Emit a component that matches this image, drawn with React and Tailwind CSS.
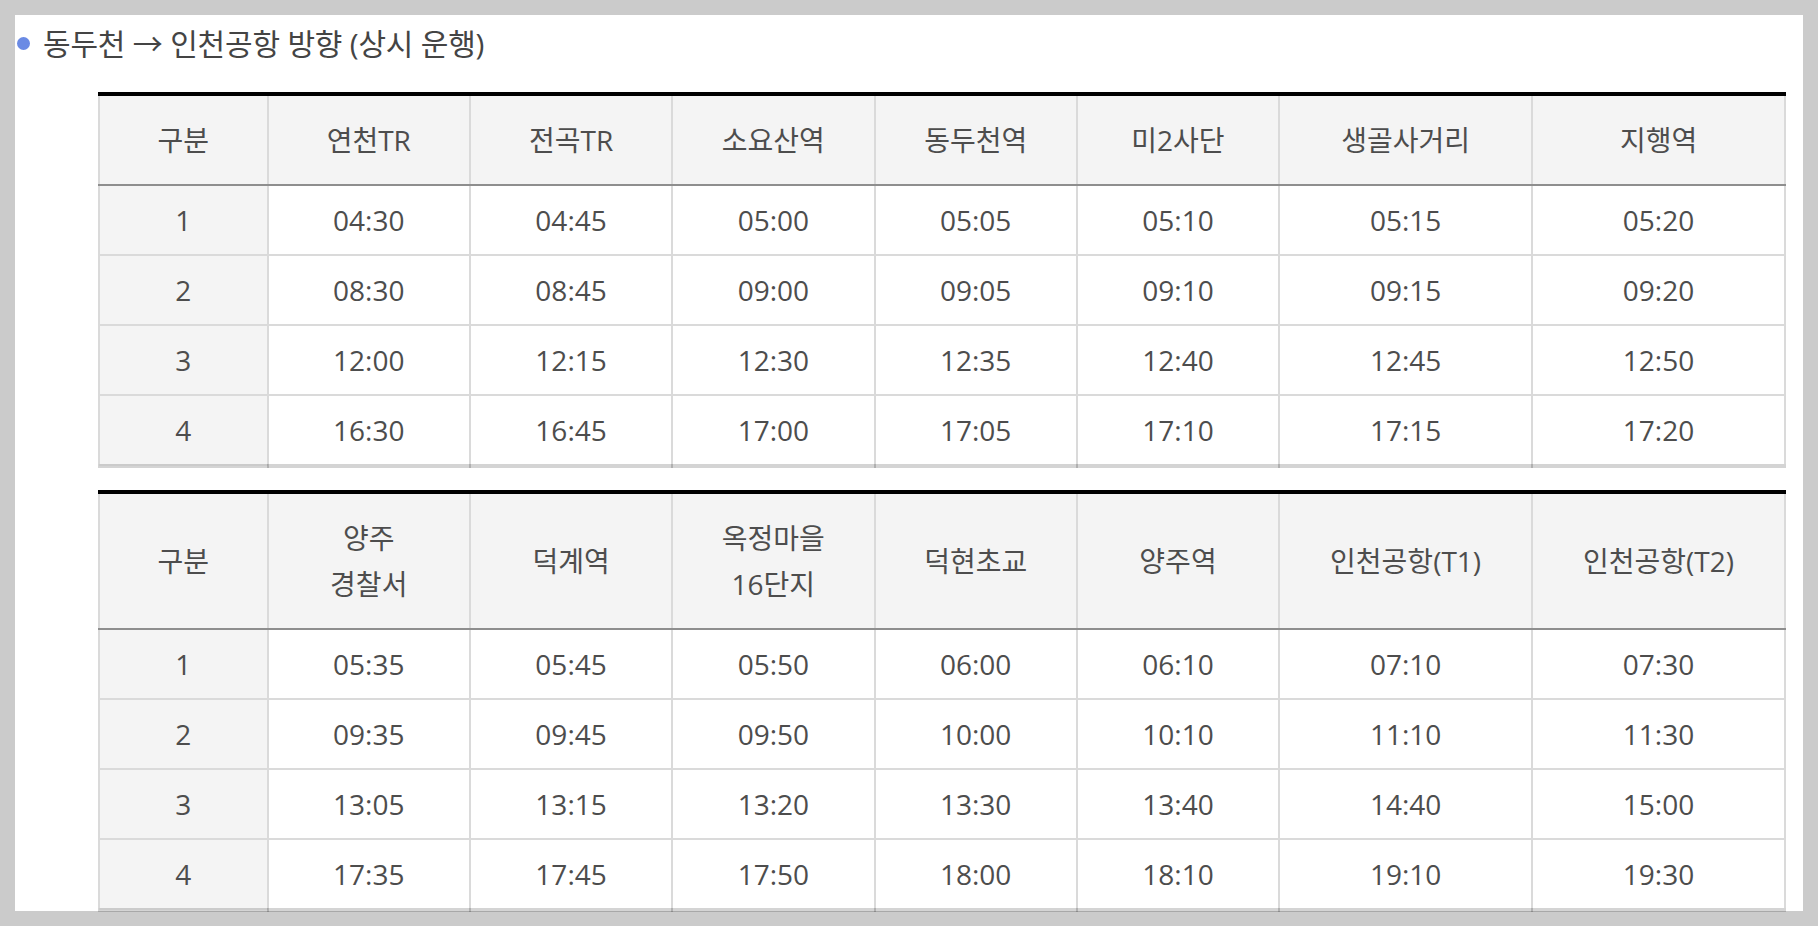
import React from 'react';

const font = { fontFamily: '"Open Sans", "Noto Sans CJK KR", sans-serif' };

const cols = ['w-[10%]', 'w-[12%]', 'w-[12%]', 'w-[12%]', 'w-[12%]', 'w-[12%]', 'w-[15%]', 'w-[15%]'];

const upper = {
  head: ['구분', '연천TR', '전곡TR', '소요산역', '동두천역', '미2사단', '생골사거리', '지행역'],
  rows: [
    ['1', '04:30', '04:45', '05:00', '05:05', '05:10', '05:15', '05:20'],
    ['2', '08:30', '08:45', '09:00', '09:05', '09:10', '09:15', '09:20'],
    ['3', '12:00', '12:15', '12:30', '12:35', '12:40', '12:45', '12:50'],
    ['4', '16:30', '16:45', '17:00', '17:05', '17:10', '17:15', '17:20'],
  ],
};

const lower = {
  head: ['구분', ['양주', '경찰서'], '덕계역', ['옥정마을', '16단지'], '덕현초교', '양주역', '인천공항(T1)', '인천공항(T2)'],
  rows: [
    ['1', '05:35', '05:45', '05:50', '06:00', '06:10', '07:10', '07:30'],
    ['2', '09:35', '09:45', '09:50', '10:00', '10:10', '11:10', '11:30'],
    ['3', '13:05', '13:15', '13:20', '13:30', '13:40', '14:40', '15:00'],
    ['4', '17:35', '17:45', '17:50', '18:00', '18:10', '19:10', '19:30'],
  ],
};

// one timetable block, black rule on top
const Timetable = ({ data, className = '' }) => (
  <table className={`w-full table-fixed border-collapse border-t-4 border-t-black border-x-2 border-x-[#dadada] border-b-4 border-b-[rgba(0,0,0,0.17)] text-[28px] text-[#4d4d4d] ${className}`}>
    <colgroup>
      {cols.map((c, i) => <col key={i} className={c} />)}
    </colgroup>
    <thead>
      <tr>
        {data.head.map((h, i) => (
          <th key={i} className="bg-[#f4f4f4] font-normal py-[21px] leading-[46px] border-x-2 border-x-[#dadada] border-b-2 border-b-[#8e8e8e] text-center">
            {Array.isArray(h) ? <>{h[0]}<br />{h[1]}</> : h}
          </th>
        ))}
      </tr>
    </thead>
    <tbody>
      {data.rows.map((r, ri) => (
        <tr key={ri}>
          {r.map((v, ci) => (
            <td key={ci} className={`py-[11px] leading-[46px] text-center border-2 border-[#dadada] ${ci === 0 ? 'bg-[#f4f4f4]' : 'bg-white'}`}>
              {v}
            </td>
          ))}
        </tr>
      ))}
    </tbody>
  </table>
);

export default function App() {
  return (
    <div className="min-h-screen bg-[#cbcbcb] p-[15px] pb-0" style={font}>
      <div className="bg-white h-[896px] pt-[5px] pr-[17px]">
        <h3 className="flex items-center h-[46px] text-[30px] font-normal text-[#444] tracking-[-0.2px]">
          <span className="w-[13px] h-[13px] rounded-full bg-[#6a8ae4] ml-[2px] mr-[13px] shrink-0" />
          동두천 → 인천공항 방향 (상시 운행)
        </h3>
        <div className="ml-[83px] mt-[26px]">
          <Timetable data={upper} />
          <Timetable data={lower} className="mt-[22px]" />
        </div>
      </div>
    </div>
  );
}
